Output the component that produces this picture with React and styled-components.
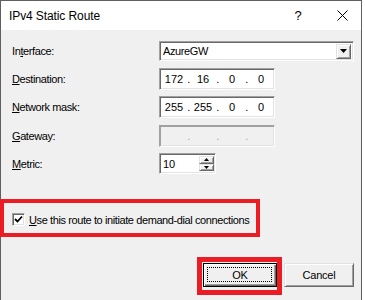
import React from 'react';
import styled, { createGlobalStyle } from 'styled-components';

const GlobalStyle = createGlobalStyle`
  html, body {
    margin: 0;
    padding: 0;
    background: #fff;
  }

  body {
    font-family: "Liberation Sans", Arial, sans-serif;
    font-size: 11px;
    letter-spacing: -0.4px;
    color: #000;
  }
`;

const RED = '#ec1c24';

const Window = styled.div`
  box-sizing: border-box;
  width: 362px;
  height: 300px;
  border: 1px solid #5f5f5f;
  border-bottom: none;
  background: #f0f0f0;
  display: flex;
  flex-direction: column;
`;

const TitleBar = styled.div`
  height: 29px;
  flex: none;
  background: #fff;
  display: flex;
  align-items: center;
  padding-left: 8px;
  font-family: "Liberation Sans", Arial, sans-serif;
  font-size: 12px;
  letter-spacing: -0.1px;
`;

const Title = styled.span`
  flex: 1;
`;

const HelpGlyph = styled.span`
  width: 10px;
  text-align: center;
  font-size: 13px;
  margin-right: 34px;
`;

const CloseGlyph = styled.svg`
  width: 11px;
  height: 11px;
  margin-right: 13px;
`;

const Body = styled.div`
  flex: 1;
  padding: 11px 7px 0 11px;
  display: flex;
  flex-direction: column;
`;

const FormGrid = styled.div`
  display: grid;
  grid-template-columns: 147px auto;
  grid-template-rows: 20px 22px 22px 22px 21px;
  row-gap: 6.5px;
  align-items: center;
`;

const Label = styled.span`
  color: ${({ $disabled }) => ($disabled ? '#6d6d6d' : '#000')};
`;

const Key = styled.span`
  text-decoration: underline;
  text-underline-offset: 1px;
`;

const sunken = `
  box-sizing: border-box;
  border: 1px solid;
  border-color: #a0a0a0 #fff #fff #a0a0a0;
  box-shadow: inset 1px 1px 0 #696969, inset -1px -1px 0 #e3e3e3;
`;

const raised = `
  box-sizing: border-box;
  border: 1px solid;
  border-color: #e3e3e3 #696969 #696969 #e3e3e3;
  box-shadow: inset 1px 1px 0 #fff, inset -1px -1px 0 #a0a0a0;
  background: #f0f0f0;
`;

const Combo = styled.div`
  ${sunken};
  width: 195px;
  height: 20px;
  background: #fff;
  display: flex;
  align-items: center;
  padding: 0 2px 0 3px;
`;

const ComboText = styled.span`
  flex: 1;
`;

const DropButton = styled.div`
  ${raised};
  width: 15px;
  height: 15px;
  display: flex;
  align-items: center;
  justify-content: center;
`;

const IpBox = styled.div`
  ${sunken};
  width: 116px;
  height: 22px;
  background: ${({ $disabled }) => ($disabled ? '#f0f0f0' : '#fff')};
  box-shadow: ${({ $disabled }) =>
    $disabled
      ? 'inset 1px 1px 0 #a0a0a0, inset -1px -1px 0 #e3e3e3'
      : 'inset 1px 1px 0 #696969, inset -1px -1px 0 #e3e3e3'};
  display: flex;
  align-items: center;
  padding-left: 2px;
  color: ${({ $disabled }) => ($disabled ? '#a0a0a0' : '#000')};
`;

const Octet = styled.span`
  width: 24px;
  text-align: center;
  letter-spacing: 0;
`;

const Dot = styled.span`
  width: 5px;
  text-align: center;
`;

const Spin = styled.div`
  ${sunken};
  width: 57px;
  height: 21px;
  background: #fff;
  display: flex;
  align-items: stretch;
  padding: 2px 1px 2px 2px;
`;

const SpinText = styled.span`
  flex: 1;
  display: flex;
  align-items: center;
  padding-left: 1px;
  letter-spacing: 0;
`;

const SpinButtons = styled.div`
  width: 15px;
  display: flex;
  flex-direction: column;
`;

const SpinButton = styled.div`
  ${raised};
  flex: 1;
  display: flex;
  align-items: center;
  justify-content: center;
`;

const Highlight = styled.div`
  box-sizing: border-box;
  border: ${({ $width }) => $width}px solid ${RED};
`;

const CheckHighlight = styled(Highlight)`
  width: 260px;
  height: 38px;
  margin: 25px 0 0 -12px;
  display: flex;
  align-items: center;
  gap: 4px;
  padding: 3px 0 0 8px;
  white-space: nowrap;
`;

const CheckBox = styled.span`
  ${sunken};
  flex: none;
  width: 13px;
  height: 13px;
  background: #fff;
  display: flex;
  align-items: center;
  justify-content: center;
`;

const ButtonRow = styled.div`
  margin-top: 20px;
  display: flex;
  justify-content: flex-end;
  align-items: flex-start;
`;

const OkHighlight = styled(Highlight)`
  padding: 1px 0 3px 1px;
`;

const Button = styled.button`
  ${raised};
  position: relative;
  width: ${({ $w }) => $w}px;
  height: 24px;
  margin: 0;
  padding: 0;
  font-family: "Liberation Sans", Arial, sans-serif;
  font-size: 11px;
  letter-spacing: -0.2px;
  color: #000;
  border-color: ${({ $default }) =>
    $default ? '#000' : '#e3e3e3 #696969 #696969 #e3e3e3'};
  box-shadow: ${({ $default }) =>
    $default
      ? 'inset 1px 1px 0 #fff, inset -1px -1px 0 #696969, inset -2px -2px 0 #a0a0a0'
      : 'inset 1px 1px 0 #fff, inset -1px -1px 0 #a0a0a0'};
`;

const FocusRing = styled.span`
  position: absolute;
  inset: 3px 4px 4px 3px;
  border: 1px dotted #000;
`;

const CancelButton = styled(Button)`
  margin: 6px 0 0 2px;
`;

const Arrow = ({ up, w = 5 }) => {
  const h = Math.ceil(w / 2);
  return (
    <svg width={w} height={h} viewBox={`0 0 ${w} ${h}`}>
      <polygon
        points={up ? `0,${h} ${w},${h} ${w / 2},0` : `0,0 ${w},0 ${w / 2},${h}`}
        fill="#000"
      />
    </svg>
  );
};

const IpAddress = ({ octets, disabled }) => (
  <IpBox $disabled={disabled}>
    {octets.map((o, i) => (
      <React.Fragment key={i}>
        {i > 0 && <Dot>.</Dot>}
        <Octet>{o}</Octet>
      </React.Fragment>
    ))}
  </IpBox>
);

const App = () => (
  <>
    <GlobalStyle />
    <Window>
      <TitleBar>
        <Title>IPv4 Static Route</Title>
        <HelpGlyph>?</HelpGlyph>
        <CloseGlyph viewBox="0 0 11 11">
          <path d="M0.5 0.5 L10.5 10.5 M10.5 0.5 L0.5 10.5" stroke="#000" strokeWidth="1" />
        </CloseGlyph>
      </TitleBar>

      <Body>
        <FormGrid>
          <Label>
            In<Key>t</Key>erface:
          </Label>
          <Combo>
            <ComboText>AzureGW</ComboText>
            <DropButton>
              <Arrow w={7} />
            </DropButton>
          </Combo>

          <Label>
            <Key>D</Key>estination:
          </Label>
          <IpAddress octets={['172', '16', '0', '0']} />

          <Label>
            <Key>N</Key>etwork mask:
          </Label>
          <IpAddress octets={['255', '255', '0', '0']} />

          <Label>
            <Key>G</Key>ateway:
          </Label>
          <IpAddress octets={['', '', '', '']} disabled />

          <Label>
            <Key>M</Key>etric:
          </Label>
          <Spin>
            <SpinText>10</SpinText>
            <SpinButtons>
              <SpinButton>
                <Arrow up />
              </SpinButton>
              <SpinButton>
                <Arrow />
              </SpinButton>
            </SpinButtons>
          </Spin>
        </FormGrid>

        <CheckHighlight $width={4}>
          <CheckBox>
            <svg width="9" height="9" viewBox="0 0 9 9">
              <path d="M1 4 L3.5 6.5 L8 1.5" fill="none" stroke="#000" strokeWidth="1.8" />
            </svg>
          </CheckBox>
          <span>
            <Key>U</Key>se this route to initiate demand-dial connections
          </span>
        </CheckHighlight>

        <ButtonRow>
          <OkHighlight $width={5}>
            <Button $w={74} $default>
              <FocusRing />
              OK
            </Button>
          </OkHighlight>
          <CancelButton $w={70}>Cancel</CancelButton>
        </ButtonRow>
      </Body>
    </Window>
  </>
);

export default App;
